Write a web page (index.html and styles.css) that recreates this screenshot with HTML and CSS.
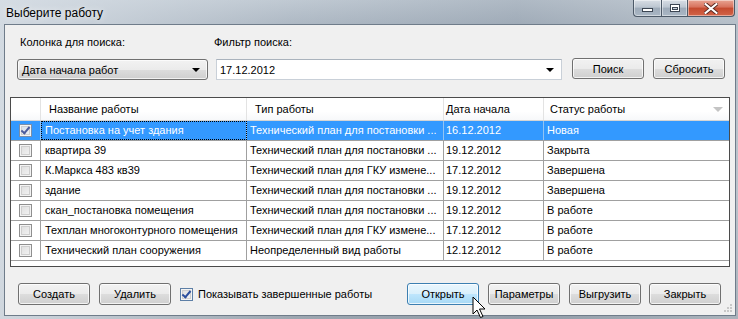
FILE: index.html
```html
<!DOCTYPE html>
<html lang="ru">
<head>
<meta charset="utf-8">
<title>Выберите работу</title>
<link rel="stylesheet" href="styles.css">
</head>
<body>
<div class="window">
  <div class="titlebar">
    <span class="title">Выберите работу</span>
    <div class="caption">
      <div class="cbtn min"><span class="g-min"></span></div>
      <div class="cbtn max"><span class="g-max"></span></div>
      <div class="cbtn close">
        <svg width="14" height="11" viewBox="0 0 14 11"><path d="M1.5 1 L12.5 10 M12.5 1 L1.5 10" stroke="#5a2a22" stroke-width="4" stroke-linecap="square"/><path d="M1.5 1 L12.5 10 M12.5 1 L1.5 10" stroke="#fff" stroke-width="2" stroke-linecap="square"/></svg>
      </div>
    </div>
  </div>
  <div class="client">
    <div class="search">
      <span class="lbl l1">Колонка для поиска:</span>
      <span class="lbl l2">Фильтр поиска:</span>
      <div class="combo c1"><span>Дата начала работ</span><i class="arrow"></i></div>
      <div class="combo c2"><span>17.12.2012</span><i class="arrow"></i></div>
      <button class="btn b-find">Поиск</button>
      <button class="btn b-reset">Сбросить</button>
    </div>

    <div class="grid">
      <div class="row head">
        <div class="cell"></div>
        <div class="cell">Название работы</div>
        <div class="cell">Тип работы</div>
        <div class="cell">Дата начала</div>
        <div class="cell last">Статус работы<i class="sort"></i></div>
      </div>
      <div class="row sel">
        <div class="cell chk"><span class="cb checked"></span></div>
        <div class="cell focus">Постановка на учет здания</div>
        <div class="cell">Технический план для постановки ...</div>
        <div class="cell">16.12.2012</div>
        <div class="cell last">Новая</div>
      </div>
      <div class="row">
        <div class="cell chk"><span class="cb"></span></div>
        <div class="cell">квартира 39</div>
        <div class="cell">Технический план для постановки ...</div>
        <div class="cell">19.12.2012</div>
        <div class="cell last">Закрыта</div>
      </div>
      <div class="row">
        <div class="cell chk"><span class="cb"></span></div>
        <div class="cell">К.Маркса 483 кв39</div>
        <div class="cell">Технический план для ГКУ измене...</div>
        <div class="cell">17.12.2012</div>
        <div class="cell last">Завершена</div>
      </div>
      <div class="row">
        <div class="cell chk"><span class="cb"></span></div>
        <div class="cell">здание</div>
        <div class="cell">Технический план для постановки ...</div>
        <div class="cell">19.12.2012</div>
        <div class="cell last">Завершена</div>
      </div>
      <div class="row">
        <div class="cell chk"><span class="cb"></span></div>
        <div class="cell">скан_постановка помещения</div>
        <div class="cell">Технический план для постановки ...</div>
        <div class="cell">19.12.2012</div>
        <div class="cell last">В работе</div>
      </div>
      <div class="row">
        <div class="cell chk"><span class="cb"></span></div>
        <div class="cell">Техплан многоконтурного помещения</div>
        <div class="cell">Технический план для ГКУ измене...</div>
        <div class="cell">17.12.2012</div>
        <div class="cell last">В работе</div>
      </div>
      <div class="row">
        <div class="cell chk"><span class="cb"></span></div>
        <div class="cell">Технический план сооружения</div>
        <div class="cell">Неопределенный вид работы</div>
        <div class="cell">12.12.2012</div>
        <div class="cell last">В работе</div>
      </div>
    </div>

    <div class="bottom">
      <button class="btn">Создать</button>
      <button class="btn">Удалить</button>
      <label class="show"><span class="cb checked blue"></span>Показывать завершенные работы</label>
      <div class="right">
        <button class="btn hover">Открыть</button>
        <button class="btn">Параметры</button>
        <button class="btn">Выгрузить</button>
        <button class="btn">Закрыть</button>
      </div>
    </div>
    <svg class="grip" width="10" height="10" viewBox="0 0 10 10">
      <rect x="7" y="1" width="2" height="2" fill="#c8c8c8"/>
      <rect x="4" y="4" width="2" height="2" fill="#c8c8c8"/>
      <rect x="7" y="4" width="2" height="2" fill="#c8c8c8"/>
      <rect x="1" y="7" width="2" height="2" fill="#c8c8c8"/>
      <rect x="4" y="7" width="2" height="2" fill="#c8c8c8"/>
      <rect x="7" y="7" width="2" height="2" fill="#c8c8c8"/>
    </svg>
  </div>
  <svg class="cursor" width="16" height="24" viewBox="0 0 16 24">
    <path d="M1 1 L1 18 L5 14 L8.5 21.5 L11 20.5 L7.5 13 L13 13 Z" fill="#fff" stroke="#000" stroke-width="1" stroke-linejoin="round"/>
  </svg>
</div>
</body>
</html>
```

FILE: styles.css
```css
* { box-sizing: border-box; }
html, body { margin: 0; padding: 0; }
body {
  width: 738px;
  height: 319px;
  overflow: hidden;
  font-family: "Liberation Sans", Arial, sans-serif;
  font-size: 11px;
  color: #000;
}
.window {
  position: relative;
  width: 738px;
  height: 319px;
  display: flex;
  flex-direction: column;
  background:
    linear-gradient(to right, rgba(215,222,229,0.9) 0, rgba(180,190,200,0.4) 40%, rgba(150,162,175,0.5) 70%, rgba(190,198,206,0.6) 100%),
    linear-gradient(to bottom, #c7d0d9 0, #aab5c1 24px, #b9c2cb 60%, #8d96a0 100%);
}
.titlebar {
  height: 24px;
  display: flex;
  align-items: flex-start;
  position: relative;
}
.title {
  font-family: "Liberation Sans", Arial, sans-serif;
  font-size: 12px;
  margin: 6px 0 0 6px;
  color: #000;
  text-shadow: 0 0 6px rgba(255,255,255,0.9);
}
.caption {
  margin-left: auto;
  margin-right: 3px;
  display: flex;
  height: 17px;
}
.cbtn {
  height: 17px;
  border: 1px solid #4d5a68;
  border-top: none;
  display: flex;
  align-items: center;
  justify-content: center;
  box-shadow: inset 0 0 0 1px rgba(255,255,255,0.45);
}
.cbtn.min {
  width: 28px;
  border-radius: 0 0 0 4px;
  border-right: none;
  background: linear-gradient(to bottom, #d8dee5 0, #bcc6d1 45%, #9eabb9 50%, #aab7c4 100%);
}
.cbtn.max {
  width: 27px;
  background: linear-gradient(to bottom, #d8dee5 0, #bcc6d1 45%, #9eabb9 50%, #aab7c4 100%);
}
.cbtn.close {
  width: 47px;
  border-left: none;
  border-radius: 0 0 4px 0;
  background: linear-gradient(to bottom, #e8a493 0, #d7715c 45%, #c44a2f 50%, #d26448 100%);
}
.g-min {
  width: 11px;
  height: 4px;
  background: #fff;
  border: 1px solid #3c4653;
  margin-top: 4px;
}
.g-max {
  width: 10px;
  height: 8px;
  border: 1px solid #3c4653;
  background: #fff;
  box-shadow: inset 0 0 0 1px #fff;
  position: relative;
}
.g-max::after {
  content: "";
  position: absolute;
  left: 1px; top: 2px; right: 1px; bottom: 1px;
  border: 1px solid #3c4653;
  background: #c9d2dc;
}

.client {
  position: relative;
  margin: 0 2px 3px 4px;
  flex: 1;
  background: #f0f0f0;
  border: 1px solid #6f7c8a;
  padding: 11px 14px 0 5px;
  display: flex;
  flex-direction: column;
}

.search {
  display: grid;
  grid-template-columns: 191px 346px 73px 72px;
  grid-template-rows: 13px 21px;
  column-gap: 8px;
  row-gap: 10px;
  padding-left: 7px;
}
.lbl { line-height: 13px; white-space: nowrap; }
.l1 { grid-row: 1; grid-column: 1; padding-left: 3px; }
.l2 { grid-row: 1; grid-column: 2 / 5; margin-left: -2px; }
.c1 { grid-row: 2; grid-column: 1; }
.c2 { grid-row: 2; grid-column: 2; }
.search .btn { height: 21px; margin-top: -1px; grid-row: 2; margin-left: 2px; }
.b-find { grid-column: 3; width: 71px; }
.b-reset { grid-column: 4; width: 70px; }
.combo {
  height: 21px;
  display: flex;
  align-items: center;
  padding: 0 7px 0 4px;
  position: relative;
}
.combo span { flex: 1; }
.c1 {
  border: 1px solid #707070;
  border-radius: 3px;
  background: linear-gradient(to bottom, #f2f2f2 0, #ebebeb 50%, #dddddd 51%, #cfcfcf 100%);
  box-shadow: inset 0 0 0 1px rgba(255,255,255,0.7);
}
.c2 {
  border: 1px solid #c9d0d8;
  border-top-color: #aab3bd;
  background: #fff;
  padding-left: 3px;
}
.arrow {
  width: 0; height: 0;
  border-left: 4px solid transparent;
  border-right: 4px solid transparent;
  border-top: 4px solid #000;
  margin-top: 1px;
}

.btn {
  font-family: "Liberation Sans", Arial, sans-serif;
  font-size: 11px;
  color: #000;
  height: 22px;
  width: 72px;
  padding: 0;
  border: 1px solid #707070;
  border-radius: 3px;
  background: linear-gradient(to bottom, #f2f2f2 0, #ebebeb 50%, #dddddd 51%, #cfcfcf 100%);
  box-shadow: inset 0 0 0 1px rgba(255,255,255,0.75);
}
.btn.hover {
  border-color: #3c7fb1;
  background: linear-gradient(to bottom, #eaf6fd 0, #d9f0fc 50%, #bee6fd 51%, #a7d9f5 100%);
}

.grid {
  margin-top: 17px;
  width: 720px;
  height: 170px;
  border: 1px solid #4b4b4b;
  background: #fff;
}
.row {
  display: grid;
  grid-template-columns: 30px 206px 197px 100px 1fr;
  height: 20px;
  border-bottom: 1px solid #a0a0a0;
}
.row.head {
  height: 23px;
  border-bottom: 1px solid #d5d5d5;
  background: linear-gradient(to bottom, #ffffff 0, #ffffff 60%, #f7f8fa 100%);
}
.cell {
  border-right: 1px solid #a0a0a0;
  padding-left: 3px;
  white-space: nowrap;
  overflow: hidden;
  line-height: 19px;
  position: relative;
}
.row .cell:nth-child(2) { padding-left: 4px; }
.row .cell:nth-child(4) { padding-left: 2px; }
.cell.last { border-right: none; }
.head .cell {
  border-right-color: #e3e3e3;
  line-height: 22px;
  padding-left: 7px;
}
.head .cell:nth-child(2), .head .cell:nth-child(3) { padding-left: 8px; }
.head .cell:nth-child(5) { padding-left: 6px; }
.sort {
  position: absolute;
  right: 6px;
  top: 9px;
  width: 0; height: 0;
  border-left: 5px solid transparent;
  border-right: 5px solid transparent;
  border-top: 5px solid #c4c4c4;
}
.row.sel { background: #3399ff; color: #fff; }
.row.sel .cell { border-right-color: #93c4f3; }
.cell.focus { outline: 1px dotted #000; outline-offset: -1px; }
.cell.chk {
  display: flex;
  align-items: center;
  justify-content: center;
  padding: 0 1px 0 0;
}
.cb {
  width: 13px;
  height: 13px;
  border: 1px solid #8f8f8f;
  background: linear-gradient(135deg, #dcdcdc 0, #f6f6f6 100%);
  box-shadow: inset 0 0 0 1px #f4f4f4, inset 0 0 0 2px #cfcfcf;
  position: relative;
  display: inline-block;
}
.sel .cb {
  border-color: #7a8ea8;
  background: linear-gradient(135deg, #d5dde8 0, #f2f5f8 100%);
}
.cb.checked::after {
  content: "";
  position: absolute;
  left: 3px;
  top: 0px;
  width: 3px;
  height: 7px;
  border: solid #4d5d9e;
  border-width: 0 2px 2px 0;
  transform: rotate(40deg);
}
.cb.blue { border-color: #5d7fa6; }
.cb.blue::after { border-color: #2c4f9e; }

.bottom {
  margin-top: 16px;
  display: flex;
  align-items: center;
  padding-left: 8px;
  gap: 9px;
}
.show {
  display: flex;
  align-items: center;
  gap: 5px;
  white-space: nowrap;
}
.right {
  margin-left: auto;
  display: flex;
  gap: 9px;
}
.right .btn:last-child { margin-left: -1px; }
.grip {
  position: absolute;
  right: 2px;
  bottom: 2px;
}
.cursor {
  position: absolute;
  left: 472px;
  top: 296px;
}
```
